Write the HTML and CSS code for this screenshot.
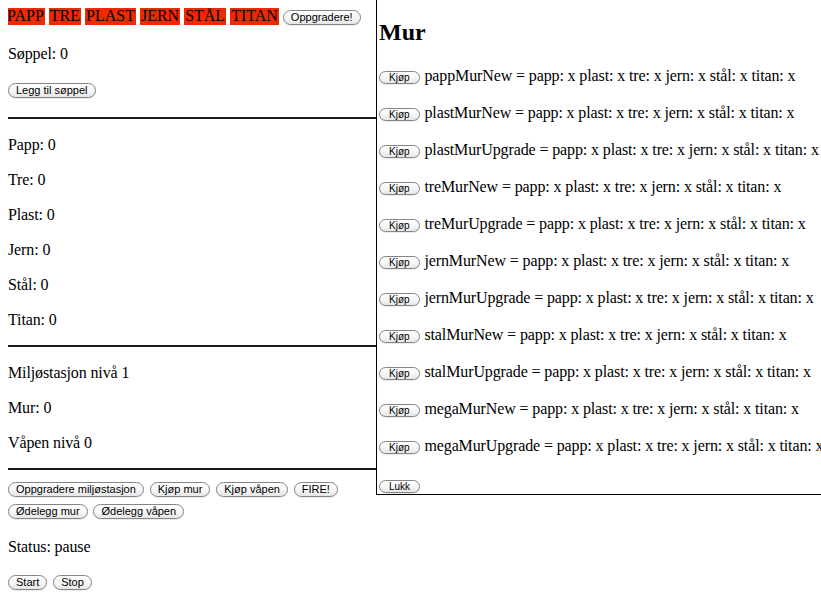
FILE: index.html
```html
<!DOCTYPE html>
<html lang="no">
<head>
<meta charset="utf-8">
<title>Miljøstasjon</title>
<link rel="stylesheet" href="styles.css">
</head>
<body>
<div class="main">
<div class="materials"><span class="mat">PAPP</span> <span class="mat">TRE</span> <span class="mat">PLAST</span> <span class="mat">JERN</span> <span class="mat">STÅL</span> <span class="mat">TITAN</span> <button class="btn">Oppgradere!</button></div>
<p>Søppel: 0</p>
<p><button class="btn">Legg til søppel</button></p>
<hr class="rule">
<p>Papp: 0</p>
<p>Tre: 0</p>
<p>Plast: 0</p>
<p>Jern: 0</p>
<p>Stål: 0</p>
<p>Titan: 0</p>
<hr class="rule">
<p>Miljøstasjon nivå 1</p>
<p>Mur: 0</p>
<p>Våpen nivå 0</p>
<hr class="rule">
<div class="actions"><button class="btn">Oppgradere miljøstasjon</button> <button class="btn">Kjøp mur</button> <button class="btn">Kjøp våpen</button> <button class="btn">FIRE!</button> <button class="btn">Ødelegg mur</button> <button class="btn">Ødelegg våpen</button></div>
<p class="status">Status: pause</p>
<div class="actions"><button class="btn">Start</button> <button class="btn">Stop</button></div>
</div>

<div class="panel">
<h2 class="title">Mur</h2>
<p class="row"><button class="btn mini">Kjøp</button> pappMurNew = papp: x plast: x tre: x jern: x stål: x titan: x</p>
<p class="row"><button class="btn mini">Kjøp</button> plastMurNew = papp: x plast: x tre: x jern: x stål: x titan: x</p>
<p class="row"><button class="btn mini">Kjøp</button> plastMurUpgrade = papp: x plast: x tre: x jern: x stål: x titan: x</p>
<p class="row"><button class="btn mini">Kjøp</button> treMurNew = papp: x plast: x tre: x jern: x stål: x titan: x</p>
<p class="row"><button class="btn mini">Kjøp</button> treMurUpgrade = papp: x plast: x tre: x jern: x stål: x titan: x</p>
<p class="row"><button class="btn mini">Kjøp</button> jernMurNew = papp: x plast: x tre: x jern: x stål: x titan: x</p>
<p class="row"><button class="btn mini">Kjøp</button> jernMurUpgrade = papp: x plast: x tre: x jern: x stål: x titan: x</p>
<p class="row"><button class="btn mini">Kjøp</button> stalMurNew = papp: x plast: x tre: x jern: x stål: x titan: x</p>
<p class="row"><button class="btn mini">Kjøp</button> stalMurUpgrade = papp: x plast: x tre: x jern: x stål: x titan: x</p>
<p class="row"><button class="btn mini">Kjøp</button> megaMurNew = papp: x plast: x tre: x jern: x stål: x titan: x</p>
<p class="row"><button class="btn mini">Kjøp</button> megaMurUpgrade = papp: x plast: x tre: x jern: x stål: x titan: x</p>
<div class="close"><button class="btn mini">Lukk</button></div>
</div>
</body>
</html>
```

FILE: styles.css
```css
html, body {
  overflow: hidden;
}
body {
  margin: 8px;
  font-family: "Liberation Serif", "Times New Roman", serif;
  font-size: 16px;
  line-height: 19px;
  letter-spacing: -0.12px;
  color: #000;
  background: #fff;
}
.main {
  width: 368px;
}
p {
  margin: 16px 0;
}
.materials {
  margin: -2px 0 0 -2px;
  letter-spacing: 0;
}
.mat {
  background: #f02a00;
  padding: 1px 1px;
}
.rule {
  border: 0;
  border-top: 2px solid #1a1a1a;
  height: 0;
  margin: 7px 0 8px;
}
.btn {
  font-family: "Liberation Sans", Arial, sans-serif;
  font-size: 11px;
  line-height: 13px;
  letter-spacing: 0;
  color: #000;
  padding: 0 7px;
  margin: 3px 2px 3px 0;
  border: 1px solid #858585;
  border-radius: 999px;
  background: linear-gradient(#ffffff, #f6f6f6 55%, #e6e6e6);
  box-shadow: 0 1px 0 rgba(0, 0, 0, 0.08);
  vertical-align: baseline;
}
.status {
  margin: 15px 0;
}
.mini {
  font-size: 10px;
  line-height: 11px;
  padding: 0 9px;
  margin: 0 1px 0 0;
}
.panel {
  position: absolute;
  top: -1px;
  left: 376px;
  right: 0;
  border: 1px solid #000;
  border-right: 0;
  background: #fff;
  padding: 0 2px;
  white-space: nowrap;
}
.title {
  font-size: 24px;
  font-weight: bold;
  line-height: 28px;
  letter-spacing: 0;
  margin: 18px 0 19px;
}
.row {
  line-height: 21px;
}
.close {
  line-height: 19px;
  padding-top: 3px;
}
```
